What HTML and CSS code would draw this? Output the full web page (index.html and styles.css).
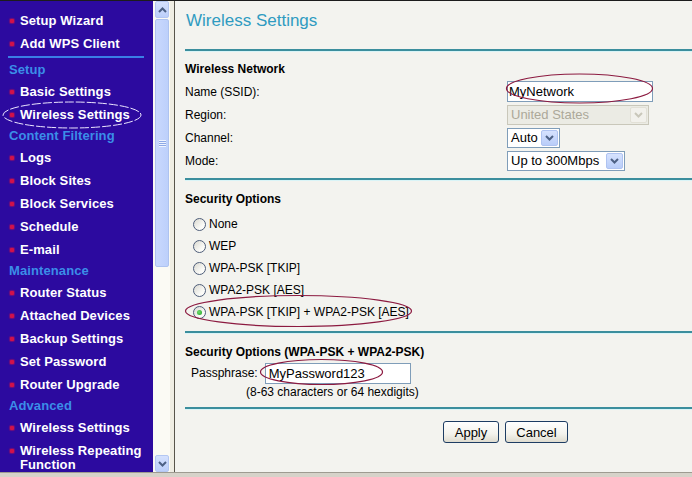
FILE: index.html
```html
<!DOCTYPE html>
<html lang="en">
<head>
    <meta charset="UTF-8">
    <meta name="viewport" content="width=device-width, initial-scale=1.0">
    <title>Wireless Settings</title>
    <link rel="stylesheet" href="styles.css">
</head>
<body>
<div class="window">
    <div class="frame">
        <nav class="sidebar">
            <div class="menu-item">Setup Wizard</div>
            <div class="menu-item">Add WPS Client</div>
            <div class="menu-rule"></div>
            <div class="menu-head">Setup</div>
            <div class="menu-item">Basic Settings</div>
            <div class="menu-item">Wireless Settings</div>
            <div class="menu-head">Content Filtering</div>
            <div class="menu-item">Logs</div>
            <div class="menu-item">Block Sites</div>
            <div class="menu-item">Block Services</div>
            <div class="menu-item">Schedule</div>
            <div class="menu-item">E-mail</div>
            <div class="menu-head">Maintenance</div>
            <div class="menu-item">Router Status</div>
            <div class="menu-item">Attached Devices</div>
            <div class="menu-item">Backup Settings</div>
            <div class="menu-item">Set Password</div>
            <div class="menu-item">Router Upgrade</div>
            <div class="menu-head">Advanced</div>
            <div class="menu-item">Wireless Settings</div>
            <div class="menu-item">Wireless Repeating Function</div>
        </nav>

        <div class="scrollbar">
            <div class="scroll-btn">
                <svg width="9" height="6" viewBox="0 0 9 6"><polyline points="1,5 4.5,1.5 8,5" fill="none" stroke="#4d6185" stroke-width="2"/></svg>
            </div>
            <div class="scroll-thumb"><span class="grip"></span></div>
            <div class="scroll-track"></div>
            <div class="scroll-btn">
                <svg width="9" height="6" viewBox="0 0 9 6"><polyline points="1,1 4.5,4.5 8,1" fill="none" stroke="#4d6185" stroke-width="2"/></svg>
            </div>
        </div>
        <div class="frame-edge"></div>

        <main class="content">
            <h1 class="page-title">Wireless Settings</h1>
            <div class="rule"></div>

            <section class="section section-network">
                <h2 class="section-title">Wireless Network</h2>
                <div class="field-row">
                    <label for="ssid">Name (SSID):</label>
                    <input type="text" id="ssid" class="text-input ssid-input" value="MyNetwork">
                </div>
                <div class="field-row">
                    <label>Region:</label>
                    <div class="select select-disabled region-select">
                        <span class="select-value">United States</span>
                        <span class="select-btn"><svg width="9" height="6" viewBox="0 0 9 6"><polyline points="1,1 4.5,4.5 8,1" fill="none" stroke="currentColor" stroke-width="2"/></svg></span>
                    </div>
                </div>
                <div class="field-row">
                    <label>Channel:</label>
                    <div class="select channel-select">
                        <span class="select-value">Auto</span>
                        <span class="select-btn"><svg width="9" height="6" viewBox="0 0 9 6"><polyline points="1,1 4.5,4.5 8,1" fill="none" stroke="currentColor" stroke-width="2"/></svg></span>
                    </div>
                </div>
                <div class="field-row">
                    <label>Mode:</label>
                    <div class="select mode-select">
                        <span class="select-value">Up to 300Mbps</span>
                        <span class="select-btn"><svg width="9" height="6" viewBox="0 0 9 6"><polyline points="1,1 4.5,4.5 8,1" fill="none" stroke="currentColor" stroke-width="2"/></svg></span>
                    </div>
                </div>
            </section>
            <div class="rule"></div>

            <section class="section section-security">
                <h2 class="section-title">Security Options</h2>
                <div class="radio-list">
                    <label class="radio-row"><input type="radio" name="security"> None</label>
                    <label class="radio-row"><input type="radio" name="security"> WEP</label>
                    <label class="radio-row"><input type="radio" name="security"> WPA-PSK [TKIP]</label>
                    <label class="radio-row"><input type="radio" name="security"> WPA2-PSK [AES]</label>
                    <label class="radio-row"><input type="radio" name="security" checked> WPA-PSK [TKIP] + WPA2-PSK [AES]</label>
                </div>
            </section>
            <div class="rule"></div>

            <section class="section section-pass">
                <h2 class="section-title">Security Options (WPA-PSK + WPA2-PSK)</h2>
                <div class="pass-row">
                    <label for="passphrase">Passphrase:</label>
                    <input type="text" id="passphrase" class="text-input pass-input" value="MyPassword123">
                </div>
                <small class="hint">(8-63 characters or 64 hexdigits)</small>
            </section>
            <div class="rule"></div>

            <div class="actions">
                <button type="button" class="btn btn-apply">Apply</button>
                <button type="button" class="btn btn-cancel">Cancel</button>
            </div>
        </main>
    </div>
    <div class="statusbar"></div>

    <svg class="marks" width="692" height="477" viewBox="0 0 692 477">
        <ellipse cx="72" cy="115" rx="69" ry="13" fill="none" stroke="#ece6ff" stroke-width="1" stroke-dasharray="9 2"/>
        <ellipse cx="579.5" cy="88.5" rx="73" ry="14.5" fill="none" stroke="#8c1a40" stroke-width="1.2"/>
        <ellipse cx="298.5" cy="311" rx="113" ry="15.5" fill="none" stroke="#8c1a40" stroke-width="1.2"/>
        <ellipse cx="321.5" cy="372" rx="61" ry="12.5" fill="none" stroke="#8c1a40" stroke-width="1.2"/>
    </svg>
</div>
</body>
</html>
```

FILE: styles.css
```css
body {
    margin: 0;
    font-family: "Liberation Sans", Arial, sans-serif;
    font-size: 12px;
    color: #000;
    background: #f3f3ef;
}

.window {
    position: relative;
    width: 692px;
    height: 477px;
    overflow: hidden;
}

.frame {
    display: flex;
    height: 472px;
    box-sizing: border-box;
    border-top: 1px solid #1c1c1c;
}

/* left menu */

.sidebar {
    width: 153px;
    flex-shrink: 0;
    background: #2c0a9f;
    padding-top: 8px;
    box-sizing: border-box;
    overflow: hidden;
    font-size: 13px;
    font-weight: bold;
    letter-spacing: 0.1px;
}

.menu-item {
    display: flex;
    align-items: flex-start;
    padding: 5px 4px 4px 10px;
    line-height: 14px;
    color: #fff;
}

.menu-item::before {
    content: "";
    flex-shrink: 0;
    width: 4px;
    height: 4px;
    margin: 5px 6px 0 0;
    background: #d0124a;
    box-shadow: 0 0 1px 1px rgba(208, 18, 74, 0.45);
    border-radius: 1px;
}

.menu-rule {
    height: 2px;
    margin: 1px 9px 2px 8px;
    background: #3a7fe6;
}

.menu-head {
    padding-left: 9px;
    line-height: 20px;
    color: #3b8ee8;
}

/* fake frame scrollbar */

.scrollbar {
    width: 17px;
    flex-shrink: 0;
    display: flex;
    flex-direction: column;
    padding: 0 1px 0 2px;
    box-sizing: border-box;
    background: #fbfaf4;
}

.scroll-btn {
    height: 17px;
    display: flex;
    align-items: center;
    justify-content: center;
    box-sizing: border-box;
    background: linear-gradient(#d5e1fe, #bccffa);
    border: 1px solid #b4c7f2;
    border-radius: 2px;
}

.scroll-thumb {
    height: 248px;
    margin-top: 1px;
    display: flex;
    align-items: center;
    justify-content: center;
    box-sizing: border-box;
    background: linear-gradient(90deg, #c9d8fd, #bdd0fb);
    border: 1px solid #aec3f0;
    border-radius: 2px;
}

.grip {
    width: 7px;
    height: 7px;
    background: repeating-linear-gradient(#eef3ff 0 1px, #8ea9e6 1px 2px);
}

.scroll-track {
    flex: 1;
}

.frame-edge {
    width: 4px;
    flex-shrink: 0;
    background: #efede3;
    border-right: 1px solid #57544b;
}

/* content */

.content {
    flex: 1;
    padding-left: 10px;
    background: #f3f3ef;
}

.page-title {
    margin: 0 0 18px 1px;
    padding-top: 10px;
    font-size: 17px;
    font-weight: normal;
    line-height: 20px;
    color: #2f9bc1;
}

.rule {
    height: 2px;
    background: #3b8e9d;
    border-bottom: 1px solid #d9f4f7;
}

.section-title {
    margin: 0;
    font-size: 12px;
    font-weight: bold;
    line-height: 20px;
}

.section-network {
    padding: 7px 0 6px;
}

.section-network .section-title {
    margin-bottom: 1px;
}

.field-row {
    display: grid;
    grid-template-columns: 322px auto;
    align-items: center;
    height: 23px;
}

.text-input {
    height: 21px;
    box-sizing: border-box;
    padding: 0 1px;
    border: 1px solid #7f9db9;
    background: #fff;
    font-family: "Liberation Sans", Arial, sans-serif;
    font-size: 13px;
    color: #000;
    outline: none;
}

.ssid-input {
    width: 146px;
}

.select {
    display: flex;
    align-items: center;
    height: 20px;
    box-sizing: border-box;
    border: 1px solid #7f9db9;
    background: #fff;
    font-size: 13px;
}

.select-value {
    flex: 1;
    padding-left: 3px;
    white-space: nowrap;
}

.select-btn {
    width: 17px;
    height: 16px;
    margin-right: 1px;
    display: flex;
    align-items: center;
    justify-content: center;
    box-sizing: border-box;
    background: linear-gradient(#d6e2fe, #b9cdf9);
    border: 1px solid #afc3f1;
    border-radius: 2px;
    color: #4d6185;
}

.select-disabled {
    background: #ebebe4;
    border-color: #c9c7ba;
    color: #aca899;
}

.select-disabled .select-btn {
    background: #f2f1ec;
    border-color: #e2e0d6;
    color: #c9c7ba;
}

.region-select {
    width: 142px;
}

.channel-select {
    width: 53px;
}

.mode-select {
    width: 118px;
}

.section-security {
    padding: 8px 0 8px;
}

.radio-list {
    margin-top: 4px;
}

.radio-row {
    display: flex;
    align-items: center;
    height: 22px;
    padding-left: 8px;
}

.radio-row input {
    appearance: none;
    -webkit-appearance: none;
    width: 13px;
    height: 13px;
    margin: 0 3px 0 0;
    border: 1px solid #4e5d79;
    border-radius: 50%;
    background: linear-gradient(135deg, #d9d8d0, #fbfbf8 70%);
    box-sizing: border-box;
    display: grid;
    place-content: center;
}

.radio-row input:checked::before {
    content: "";
    width: 5px;
    height: 5px;
    border-radius: 50%;
    background: radial-gradient(circle at 40% 40%, #6fdc6f, #21a121);
}

.section-pass {
    padding: 8px 0 7px;
}

.pass-row {
    display: flex;
    align-items: center;
    height: 22px;
    padding-left: 6px;
}

.pass-input {
    width: 146px;
    margin-left: 7px;
    padding-left: 3px;
}

.hint {
    display: block;
    padding-left: 61px;
    line-height: 16px;
    font-size: 12px;
}

.actions {
    display: flex;
    gap: 6px;
    padding: 11px 0 0 258px;
}

.btn {
    height: 22px;
    padding: 0;
    border: 1px solid #1d3c63;
    border-radius: 3px;
    background: linear-gradient(#ffffff, #f3f2ec 60%, #dedbcf);
    font-family: "Liberation Sans", Arial, sans-serif;
    font-size: 13px;
    color: #000;
    cursor: pointer;
}

.btn-apply {
    width: 56px;
}

.btn-cancel {
    width: 63px;
}

.statusbar {
    height: 5px;
    box-sizing: border-box;
    border-top: 1px solid #9e9b91;
    background: #d6d2c9;
}

.marks {
    position: absolute;
    left: 0;
    top: 0;
    pointer-events: none;
}
```
